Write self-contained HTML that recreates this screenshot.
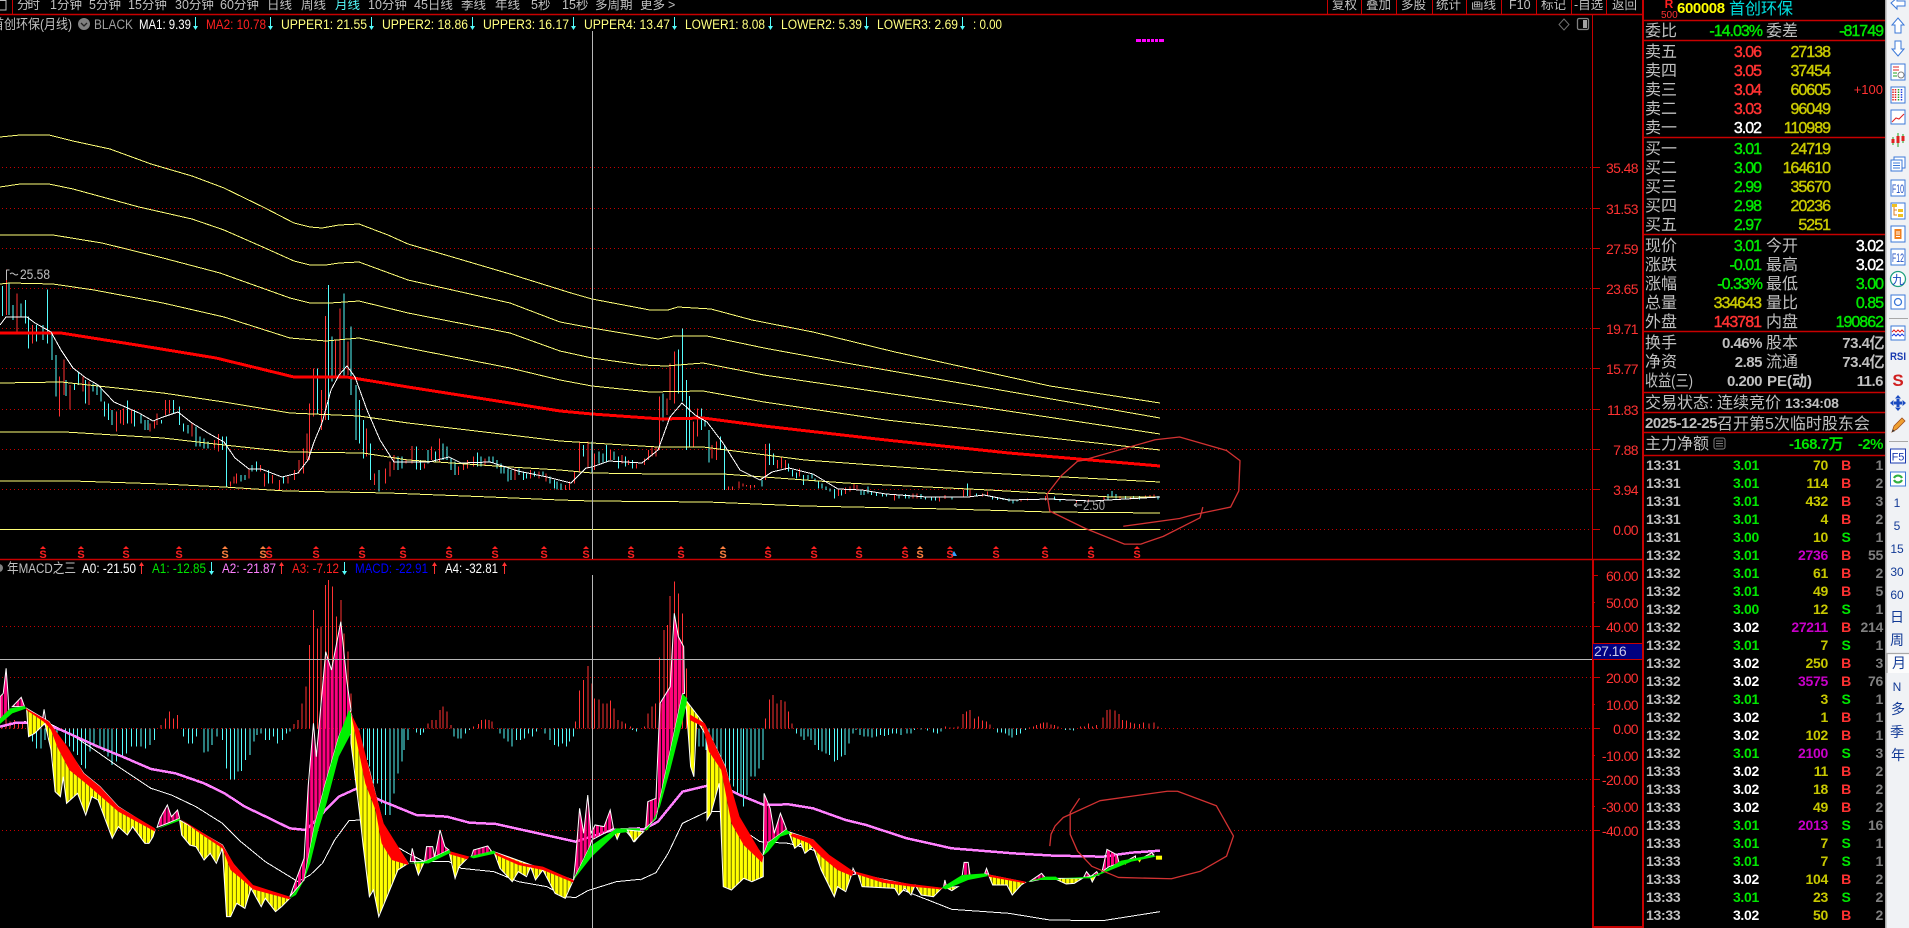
<!DOCTYPE html>
<html><head><meta charset="utf-8"><title>首创环保</title>
<style>
html,body{margin:0;padding:0;background:#000;width:1909px;height:928px;overflow:hidden}
svg{position:absolute;left:0;top:0;display:block}
text{font-family:"Liberation Sans","WenQuanYi Zen Hei","Noto Sans CJK SC",sans-serif;white-space:pre}
.v{vector-effect:non-scaling-stroke}
.gr{stroke:#c80000;stroke-width:1;stroke-dasharray:1 3}
.b{fill:none;stroke:#ffff78;stroke-width:1;shape-rendering:crispEdges}
.cr{shape-rendering:crispEdges}
.tb{font-size:12.5px;fill:#c0c0c0}
.ax{font-size:14px;fill:#ff3232;text-anchor:end;letter-spacing:-.6px}
.lg{font-size:13.5px}
.l{font-size:16px;fill:#c0c0c0}
.n{font-size:16px;font-weight:normal;text-anchor:end;letter-spacing:-1px;stroke-width:.45px}
.t{font-size:14px;font-weight:bold;letter-spacing:-.3px}
.u{font-size:15px;font-weight:bold;letter-spacing:-.5px}
.e{text-anchor:end}
.g{fill:#00e600}.w{fill:#fff}.y{fill:#c8c800}.m{fill:#c800c8}.r{fill:#ff3232}.s{fill:#c0c0c0}.d{fill:#808080}
.n .g{stroke:#00e600}.n .w{stroke:#fff}.n .y{stroke:#c8c800}.n .r{stroke:#ff3232}
.sm{font-size:11px;font-weight:bold;text-anchor:middle;fill:#ff2020}
.sb{font-size:14px;fill:#123a96;text-anchor:middle}
.bx{fill:#fff;stroke:#3b78d8;stroke-width:1}
</style></head><body>
<svg width="1909" height="928" viewBox="0 0 1909 928" xmlns="http://www.w3.org/2000/svg">
<defs>
<pattern id="st" patternUnits="userSpaceOnUse" width="10" height="10"><rect width="10" height="10" fill="#000"/><rect width="8.6" height="10" fill="#ffff00"/></pattern>
<pattern id="pk" patternUnits="userSpaceOnUse" width="10" height="10"><rect width="7.5" height="10" fill="#ff0080"/></pattern>
</defs>
<rect width="1909" height="928" fill="#000"/>

<!-- grid upper -->
<g class="gr"><path class="gr" d="M2 167.5H1592M2 208.5H1592M2 248.5H1592M2 288.5H1592M2 328.5H1592M2 368.5H1592M2 409.5H1592M2 449.5H1592M2 489.5H1592M1160 529.5H1592"/>
<path class="gr" d="M2 626.5H1592M2 677.5H1592M1 728.5H1592M2 779.5H1592M2 830.5H1592"/></g>

<!-- upper candles part 1 -->
<g transform="translate(0,260) scale(.40816,.33333)" fill="none" shape-rendering="crispEdges">
<path class="v" stroke="#54fcfc" d="M6 78V168M22 70V165M32 135V180M52 130V170M62 120V190M70 170V265M90 195V245M105 195V240M116 88V250M127 215V300M137 285V410M162 360V408M182 370V390M192 335V375M210 360V430M228 370V395M238 375V405M248 385V425M256 425V470M266 430V480M275 450V495M312 422V490M330 450V500M345 465V490M355 480V510M362 480V510M396 480V490M425 420V460M440 440V495M450 490V515M460 495V520M480 500V560M490 530V560M500 535V565M510 545V565M545 530V570M555 530V680M590 645V665M600 645V660M618 615V635M628 605V635M658 630V670M695 650V670M778 325V460M805 75V480M813 230V365M843 100V350M860 200V405M872 375V540M881 420V550M890 480V595M908 550V660M928 630V695M975 590V630M985 590V625M1020 560V628M1030 600V630M1048 570V610M1067 575V605M1085 550V600M1095 560V600M1105 595V630M1115 605V645M1170 578V620M1178 590V620M1198 590V605M1208 590V610M1218 600V625M1228 610V640M1235 620V640M1245 625V665M1252 630V660M1272 625V645M1282 635V660M1290 640V655M1310 635V650M1330 635V650M1348 650V670M1358 660V685M1365 665V688M1375 670V690M1430 555V590M1450 545V640M1467 575V610M1477 580V610M1486 555V605M1504 575V600M1515 590V625M1533 590V620M1550 600V625"/>
<path class="v" stroke="#ff3232" d="M16 28V165M42 100V215M80 195V250M146 350V470M157 298V405M172 375V448M203 350V395M218 365V435M285 455V515M295 450V490M303 445V495M322 450V490M368 490V515M378 480V505M385 460V495M405 420V465M415 420V460M470 490V530M525 540V565M535 522V575M565 665V680M573 650V670M580 640V670M610 625V655M638 615V635M648 640V680M668 645V670M685 660V690M705 650V670M722 630V660M733 600V640M743 565V640M752 520V600M758 430V600M768 325V470M788 390V510M797 168V480M822 240V350M833 145V350M852 245V345M898 505V590M918 640V675M945 625V670M955 605V650M965 585V630M995 600V610M1010 558V610M1040 610V625M1057 560V600M1077 535V605M1123 620V645M1135 610V630M1145 600V625M1160 590V620M1188 595V615M1262 625V660M1300 630V655M1320 635V655M1338 640V665M1385 675V690M1395 665V690M1408 635V670M1420 548V635M1440 545V625M1457 580V630M1496 570V600M1524 585V610M1540 600V615M1560 610V625"/>
</g>
<!-- upper candles part 2 -->
<g transform="translate(560,290) scale(.40816,.33333)" fill="none" shape-rendering="crispEdges">
<path class="v" stroke="#54fcfc" d="M252 310V395M290 178V310M300 115V335M310 270V480M317 318V470M347 355V420M355 390V410M365 420V518M393 440V480M403 465V600M495 570V590M513 460V525M523 490V525M560 520V545M570 540V560M580 548V565M597 555V585M607 555V570M617 550V565M625 565V575M633 575V595M642 580V595M652 590V600M662 595V605M672 597V625M690 600V617M737 600V615M745 600V615M755 590V610M763 605V615M775 608V618M790 610V620M800 610V620M830 615V625M847 612V625M855 615V625M885 612V627M895 620V628M910 622V632M920 622V632M960 622V628M998 580V618M1020 610V620M1060 618V628M1072 622V630M1085 624V630M1100 625V635M1110 628V640M1120 628V635M1212 620V630M1225 628V635M1342 612V628M1352 603V622M1362 612V625M1385 618V625M1405 618V625M1420 618V628M1465 618V628"/>
<path class="v" stroke="#ff3232" d="M207 505V525M217 480V510M225 470V500M235 470V500M244 320V480M262 325V375M270 220V330M280 185V340M327 395V470M337 355V440M373 465V505M383 455V510M413 590V600M423 590V600M438 575V595M448 580V590M457 585V590M467 585V595M477 585V592M503 462V570M533 510V535M543 500V535M552 510V540M587 535V560M682 595V618M700 592V612M710 590V605M720 582V600M728 585V600M820 612V632M865 610V625M875 610V625M930 622V635M943 615V627M988 600V622M1005 600V622M1035 610V620M1047 605V618M1130 628V635M1145 625V632M1190 618V632M1265 630V638M1295 628V636M1333 618V630M1372 618V628M1398 620V628M1435 616V624M1445 615V624M1455 613V623"/>
</g>

<!-- bands -->
<polyline class="b" points="0,137 20,135 49,135 73,141 110,149 151,164 192,176 224,188 265,208 294,223 310,227 322,228 339,225 359,224 388,235 408,244 449,256 510,274 571,293 592,299 650,310 668,310 678,307 711,309 752,320 813,332 895,352 968,368 1050,386 1160,403"/>
<polyline class="b" points="0,187 20,184 49,184 73,189 139,207 192,219 224,230 265,248 294,261 310,265 326,265 339,263 359,262 408,280 510,303 560,322 592,328 658,339 674,336 707,336 764,348 846,363 1160,418"/>
<polyline class="b" points="0,235 53,235 102,243 163,258 220,273 290,298 310,303 330,303 359,301 408,313 510,333 560,351 592,358 642,365 666,366 703,363 764,375 886,393 968,405 1160,434"/>
<polyline class="b" points="0,284 10,283 53,284 94,290 163,303 224,317 290,338 326,341 359,338 408,348 510,368 560,380 592,386 650,392 703,391 764,402 886,420 1160,450"/>
<polyline class="b" points="0,383 61,382 163,393 224,402 290,413 359,416 408,423 510,435 560,441 592,443 658,447 703,447 805,460 968,472 1160,482"/>
<polyline class="b" points="0,432 65,432 163,438 224,445 290,452 363,453 408,460 510,467 560,470 592,473 658,474 723,474 846,483 989,490 1111,497 1160,497"/>
<polyline class="b" points="0,481 73,481 163,484 224,487 286,491 388,493 490,497 560,500 592,501 707,502 805,506 948,509 1050,512 1160,513"/>
<path class="b" d="M0 529.5H1160"/>
<polyline class="cr" fill="none" stroke="#ff0000" stroke-width="3" points="0,333 61,333 143,346 216,358 294,377 347,377 408,387 510,403 560,411 592,414 662,419 703,418 764,426 886,440 1009,453 1160,466"/>
<polyline class="cr" fill="none" stroke="#fff" stroke-width="1" points="0,325 6,317 27,317 35,323 51,332 61,350 73,368 86,378 98,385 114,402 139,413 153,421 163,417 178,412 192,423 208,433 224,442 235,458 249,469 261,469 282,477 298,473 308,460 314,442 322,423 331,390 339,375 347,366 355,377 367,410 380,440 394,462 429,462 449,457 461,463 490,462 518,471 547,477 571,483 586,468 592,467 609,461 642,463 658,450 670,417 682,403 695,415 707,422 723,443 740,470 760,480 772,472 789,468 813,474 838,489 862,490 886,494 927,497 968,497 984,495 1009,500 1050,499 1091,501 1160,497"/>

<!-- top bar -->
<g class="tb">
<text x="17" y="9" textLength="23">分时</text><text x="50" y="9">1分钟</text><text x="89" y="9">5分钟</text><text x="128" y="9">15分钟</text><text x="175" y="9">30分钟</text><text x="220" y="9">60分钟</text><text x="267" y="9">日线</text><text x="301" y="9">周线</text><text x="335" y="9" style="fill:#54fcfc">月线</text><text x="368" y="9">10分钟</text><text x="414" y="9">45日线</text><text x="461" y="9">季线</text><text x="495" y="9">年线</text><text x="531" y="9">5秒</text><text x="562" y="9">15秒</text><text x="595" y="9">多周期</text><text x="640" y="9">更多</text><text x="668" y="9">&gt;</text>
<text x="1332" y="9">复权</text><text x="1366" y="9">叠加</text><text x="1401" y="9">多股</text><text x="1436" y="9">统计</text><text x="1471" y="9">画线</text><text x="1509" y="9">F10</text><text x="1541" y="9">标记</text><text x="1574" y="9">-自选</text><text x="1612" y="9">返回</text>
</g>
<path d="M0 .5H6V10H0" fill="none" stroke="#c0c0c0"/>
<path stroke="#c80000" fill="none" d="M12.5 0V14M1327.5 0V14M1361.5 0V14M1396.5 0V14M1432.5 0V14M1466.5 0V14M1501.5 0V14M1536.5 0V14M1571.5 0V14M1606.5 0V14"/>
<path stroke="#c80000" stroke-width="1.5" d="M0 14.5H1643"/>

<!-- upper legend -->
<g class="lg">
<text x="-8" y="29" fill="#c0c0c0" textLength="80" lengthAdjust="spacingAndGlyphs">首创环保(月线)</text>
<circle cx="84" cy="24" r="6" fill="#808080"/><path d="M81 23l3 3 3-3" fill="none" stroke="#222" stroke-width="1.3"/>
<text x="94" y="29" fill="#a0a0a0" textLength="39" lengthAdjust="spacingAndGlyphs">BLACK</text>
<text x="139" y="29" fill="#fff" textLength="52" lengthAdjust="spacingAndGlyphs">MA1: 9.39</text>
<text x="206" y="29" fill="#ff2020" textLength="60" lengthAdjust="spacingAndGlyphs">MA2: 10.78</text>
<g fill="#ffff80">
<text x="281" y="29" textLength="86" lengthAdjust="spacingAndGlyphs">UPPER1: 21.55</text>
<text x="382" y="29" textLength="86" lengthAdjust="spacingAndGlyphs">UPPER2: 18.86</text>
<text x="483" y="29" textLength="86" lengthAdjust="spacingAndGlyphs">UPPER3: 16.17</text>
<text x="584" y="29" textLength="86" lengthAdjust="spacingAndGlyphs">UPPER4: 13.47</text>
<text x="685" y="29" textLength="80" lengthAdjust="spacingAndGlyphs">LOWER1: 8.08</text>
<text x="781" y="29" textLength="81" lengthAdjust="spacingAndGlyphs">LOWER2: 5.39</text>
<text x="877" y="29" textLength="81" lengthAdjust="spacingAndGlyphs">LOWER3: 2.69</text>
<text x="973" y="29" textLength="29" lengthAdjust="spacingAndGlyphs">: 0.00</text>
</g></g>
<g stroke="#54fcfc" fill="#54fcfc"><path d="M195.5 17V26M270.5 17V26M371.5 17V26M472.5 17V26M573.5 17V26M674.5 17V26M770.5 17V26M866.5 17V26M962.5 17V26"/><path stroke="none" d="M193 26h5l-2.5 4zM268 26h5l-2.5 4zM369 26h5l-2.5 4zM470 26h5l-2.5 4zM571 26h5l-2.5 4zM672 26h5l-2.5 4zM768 26h5l-2.5 4zM864 26h5l-2.5 4zM960 26h5l-2.5 4z"/></g>

<path d="M1136 40.5H1165" stroke="#ff00ff" stroke-width="3" stroke-dasharray="5 1 4 1 3 1 3 1 3 1 5"/>
<path d="M1564 19l5 5.500-5 5.500-5-5.500z" fill="none" stroke="#707070"/>
<rect x="1577.500" y="18.500" width="11" height="11" rx="1.500" fill="none" stroke="#808080" stroke-width="1.300"/><rect x="1583" y="20" width="4" height="8" fill="#a0a0a0"/>

<text x="20" y="279" font-size="13.5" fill="#c0c0c0" textLength="30" lengthAdjust="spacingAndGlyphs">25.58</text>
<path d="M6.500 270V280M6.500 270h3M10 274q2-2 4 0t4 0" fill="none" stroke="#c0c0c0"/>
<path d="M1074 505h8M1074 505l3-2M1074 505l3 2" stroke="#c0c0c0" fill="none"/><text x="1083" y="510" font-size="13.500" fill="#a8a8a8" textLength="22" lengthAdjust="spacingAndGlyphs">2.50</text>

<!-- S markers -->
<g>
<path fill="#ff2020" d="M43 546l3 3h-6zM81 546l3 3h-6zM126 546l3 3h-6zM179 546l3 3h-6zM269 546l3 3h-6zM316 546l3 3h-6zM362 546l3 3h-6zM403 546l3 3h-6zM449 546l3 3h-6zM495 546l3 3h-6zM544 546l3 3h-6zM586 546l3 3h-6zM631 546l3 3h-6zM681 546l3 3h-6zM768 546l3 3h-6zM814 546l3 3h-6zM859 546l3 3h-6zM905 546l3 3h-6zM950 546l3 3h-6zM996 546l3 3h-6zM1045 546l3 3h-6zM1091 546l3 3h-6zM1137 546l3 3h-6z"/>
<path fill="#ff8040" d="M225 546l3 3h-6zM263 546l3 3h-6zM723 546l3 3h-6zM920 546l3 3h-6z"/>
<path fill="#30a0ff" d="M954 551l3 5h-6z"/>
<g class="sm"><text x="43" y="558">S</text><text x="81" y="558">S</text><text x="126" y="558">S</text><text x="179" y="558">S</text><text x="269" y="558">S</text><text x="316" y="558">S</text><text x="362" y="558">S</text><text x="403" y="558">S</text><text x="449" y="558">S</text><text x="495" y="558">S</text><text x="544" y="558">S</text><text x="586" y="558">S</text><text x="631" y="558">S</text><text x="681" y="558">S</text><text x="768" y="558">S</text><text x="814" y="558">S</text><text x="859" y="558">S</text><text x="905" y="558">S</text><text x="950" y="558">S</text><text x="996" y="558">S</text><text x="1045" y="558">S</text><text x="1091" y="558">S</text><text x="1137" y="558">S</text>
<g style="fill:#ff8040"><text x="225" y="558" style="fill:#ff8040">S</text><text x="263" y="558" style="fill:#ff8040">S</text><text x="723" y="558" style="fill:#ff8040">S</text><text x="920" y="558" style="fill:#ff8040">S</text></g></g>
</g>

<!-- divider -->
<path d="M0 559.500H1643" stroke="#c80000" stroke-width="1.500"/>

<!-- lower legend -->
<g class="lg">
<circle cx="-1" cy="568" r="4" fill="#808080"/>
<text x="7" y="573" fill="#c0c0c0" textLength="69" lengthAdjust="spacingAndGlyphs">年MACD之三</text>
<text x="82" y="573" fill="#fff" textLength="54" lengthAdjust="spacingAndGlyphs">A0: -21.50</text>
<text x="152" y="573" fill="#00e600" textLength="54" lengthAdjust="spacingAndGlyphs">A1: -12.85</text>
<text x="222" y="573" fill="#ff80ff" textLength="54" lengthAdjust="spacingAndGlyphs">A2: -21.87</text>
<text x="292" y="573" fill="#ff2020" textLength="47" lengthAdjust="spacingAndGlyphs">A3: -7.12</text>
<text x="355" y="573" fill="#0000ff" textLength="73" lengthAdjust="spacingAndGlyphs">MACD: -22.91</text>
<text x="445" y="573" fill="#fff" textLength="53" lengthAdjust="spacingAndGlyphs">A4: -32.81</text>
</g>
<path stroke="#ff3232" d="M141.500 565V574M281.500 565V574M434.500 565V574M504.500 565V574"/><path fill="#ff3232" d="M139 566h5l-2.500-4zM279 566h5l-2.500-4zM432 566h5l-2.500-4zM502 566h5l-2.500-4z"/>
<path stroke="#54fcfc" d="M211.500 562V571M344.500 562V571"/><path fill="#54fcfc" d="M209 571h5l-2.500 4zM342 571h5l-2.500 4z"/>

<!-- MACD left part -->
<g transform="translate(0,570) scale(.40816,.33333)">
<g fill="none" shape-rendering="crispEdges">
<path class="v" stroke="#ff3232" d="M5 475V465M15 475V440M25 475V455M35 475V450M45 475V455M55 475V455M395 475V465M405 475V445M415 475V425M425 475V445M435 475V435M720 475V462M730 475V450M740 475V400M750 475V350M758 475V225M768 475V120M778 475V175M787 475V170M797 475V45M805 475V30M815 475V50M825 475V140M835 475V90M843 475V190M852 475V245M860 475V370M1048 475V460M1058 475V450M1068 475V450M1078 475V420M1085 475V410M1095 475V425M1105 475V465M1160 475V470M1172 475V462M1180 475V450M1190 475V448M1198 475V450M1206 475V455M1410 475V455M1420 475V362M1430 475V330M1440 475V288M1450 475V340M1457 475V385M1467 475V388M1477 475V400M1487 475V400M1496 475V392M1504 475V415M1514 475V450M1524 475V455M1533 475V460M1545 475V470"/>
<path class="v" stroke="#54fcfc" d="M80 475V515M90 475V535M100 475V535M110 475V510M140 475V510M160 475V520M170 475V530M180 475V545M190 475V555M200 475V585M210 475V595M220 475V545M230 475V530M245 475V535M255 475V545M265 475V560M275 475V585M285 475V575M300 475V560M310 475V550M322 475V530M335 475V530M345 475V530M357 475V535M367 475V525M378 475V510M450 475V500M462 475V520M472 475V520M482 475V500M500 475V548M510 475V545M520 475V525M532 475V500M545 475V510M555 475V595M565 475V628M575 475V628M583 475V605M592 475V603M602 475V570M612 475V555M622 475V515M630 475V495M640 475V490M650 475V510M660 475V510M670 475V500M680 475V520M692 475V510M702 475V490M710 475V485M880 475V540M890 475V570M900 475V570M905 475V590M915 475V640M925 475V640M935 475V700M945 475V735M955 475V735M965 475V670M975 475V610M985 475V575M990 475V540M1000 475V510M1020 475V488M1030 475V495M1038 475V488M1112 475V500M1122 475V505M1130 475V505M1140 475V490M1150 475V480M1225 475V490M1235 475V505M1245 475V515M1255 475V530M1265 475V510M1275 475V510M1285 475V505M1295 475V490M1305 475V500M1315 475V485M1335 475V490M1347 475V510M1358 475V525M1368 475V530M1378 475V520M1388 475V530M1395 475V515M1405 475V500M1550 475V480M1560 475V485"/>
</g>
<polyline class="v cr" fill="none" stroke="#fff" stroke-width="1" points="0,470 60,455 120,460 170,490 220,530 290,590 345,635 370,655 420,675 480,710 545,760 590,815 650,875 730,935 760,915 790,880 820,810 855,752 882,750 930,800 1000,850 1040,875 1100,875 1130,895 1210,905 1270,935 1340,950 1385,980 1410,983 1440,962 1510,935 1568,928"/>
<polyline class="v cr" fill="none" stroke="#ff80ff" stroke-width="2.5" points="0,470 40,458 100,458 150,480 240,530 300,560 370,597 430,610 500,640 550,670 600,710 660,745 710,775 750,780 790,730 830,680 875,655 930,690 1020,735 1095,740 1150,758 1215,762 1300,785 1410,815 1500,780 1568,775"/>
<g fill="url(#st)" stroke="#fff" stroke-width="1">
<polygon class="v" points="65,415 120,455 150,510 205,610 245,650 290,710 380,780 375,800 365,820 355,820 325,770 312,795 290,770 275,805 240,690 225,680 210,735 190,670 163,700 155,620 148,680 135,665 125,540 110,460 85,490 70,500"/>
<polygon class="v" points="440,750 545,825 570,880 620,950 710,985 690,1010 675,1025 650,985 640,1010 615,955 600,1015 580,1000 565,1040 555,1040 545,835 530,880 515,850 500,870 480,830 465,825 445,795"/>
<polygon class="v" points="860,430 905,600 940,770 1000,880 975,900 955,960 928,1040 915,960 905,980 890,830 880,720 860,520"/>
<polygon class="v" points="1015,875 1040,875 1025,915"/>
<polygon class="v" points="1100,845 1145,865 1125,890 1115,925"/>
<polygon class="v" points="1210,845 1405,930 1385,985 1360,970 1330,900 1312,930 1300,890 1290,920 1270,905 1255,935 1225,895"/>
<polygon class="v" points="1505,785 1520,785 1512,808"/>
<polygon class="v" points="1530,778 1568,780 1568,795 1555,815 1545,800"/>
</g>
<g fill="url(#pk)" stroke="#fff" stroke-width="1">
<polygon class="v" points="0,380 8,370 15,295 20,380 22,430 0,450"/>
<polygon class="v" points="30,410 52,382 60,410"/>
<polygon class="v" points="104,450 108,418 112,450"/>
<polygon class="v" points="385,772 392,745 410,705 420,740 435,720 440,745 400,765"/>
<polygon class="v" points="710,980 725,930 745,865 755,650 768,460 775,560 798,245 812,300 835,155 850,335 860,420 830,500 795,650 770,770 745,930"/>
<polygon class="v" points="1005,875 1010,835 1018,875"/>
<polygon class="v" points="1040,875 1045,830 1060,830 1065,860"/>
<polygon class="v" points="1065,860 1078,780 1090,830 1100,840"/>
<polygon class="v" points="1155,860 1160,840 1195,828 1205,845"/>
<polygon class="v" points="1405,930 1410,870 1420,715 1430,790 1440,675 1448,790 1458,765 1480,770 1495,720 1503,775 1450,810 1445,830"/>
</g>
<g fill="#ff0000">
<polygon points="60,412 120,455 165,530 205,610 245,650 290,710 380,775 380,785 290,725 215,645 170,600 140,530 125,480 110,458 65,420"/>
<polygon points="440,745 545,825 575,885 620,945 710,980 710,988 620,958 590,925 565,900 545,835 490,790"/>
<polygon points="860,430 880,480 905,600 940,760 1000,878 1000,885 960,870 935,820 920,720 895,640 875,520"/>
<polygon points="1100,843 1150,860 1145,868 1100,852"/>
<polygon points="1210,845 1280,880 1330,890 1405,930 1405,938 1330,900 1270,885 1215,855"/>
</g>
<g fill="#00f000">
<polygon points="0,445 25,415 60,408 65,415 30,430 0,462"/>
<polygon points="380,780 440,745 440,752 390,775"/>
<polygon points="710,985 745,930 770,770 795,650 830,500 855,420 860,430 860,490 830,560 800,700 780,780 760,880 745,930 725,975"/>
<polygon points="1000,880 1040,875 1100,840 1105,848 1050,880"/>
<polygon points="1150,860 1210,842 1215,850 1160,865"/>
<polygon points="1405,930 1445,830 1510,775 1568,775 1568,782 1510,790 1450,860"/>
</g>
</g>

<!-- MACD right part -->
<g transform="translate(560,570) scale(.40816,.33333)">
<g fill="none" shape-rendering="crispEdges">
<path class="v" stroke="#ff3232" d="M207 475V470M216 475V430M225 475V410M234 475V400M244 475V262M250 475V400M255 475V180M263 475V165M270 475V78M280 475V35M290 475V70M300 475V130M310 475V295M503 475V445M513 475V388M522 475V375M532 475V400M542 475V390M551 475V395M560 475V425M569 475V460M945 475V470M955 475V473M965 475V472M975 475V470M987 475V432M996 475V425M1005 475V420M1015 475V445M1025 475V440M1035 475V452M1045 475V455M1053 475V463M1150 475V472M1160 475V470M1168 475V465M1177 475V460M1185 475V457M1193 475V458M1203 475V463M1212 475V465M1220 475V470M1275 475V470M1285 475V470M1295 475V460M1305 475V470M1315 475V465M1330 475V442M1340 475V420M1348 475V418M1360 475V422M1370 475V432M1378 475V450M1388 475V452M1398 475V457M1408 475V460M1420 475V462M1430 475V458M1443 475V460M1455 475V457M1465 475V470"/>
<path class="v" stroke="#54fcfc" d="M340 475V530M350 475V530M358 475V540M365 475V580M375 475V590M385 475V600M395 475V640M405 475V650M415 475V680M425 475V650M435 475V670M443 475V675M450 475V710M458 475V675M468 475V620M478 475V620M487 475V595M497 475V570M580 475V490M590 475V500M598 475V510M607 475V500M615 475V510M625 475V525M633 475V540M642 475V545M652 475V550M660 475V555M672 475V575M680 475V570M690 475V560M698 475V555M708 475V520M718 475V490M725 475V480M735 475V495M745 475V500M755 475V500M765 475V503M775 475V500M785 475V495M795 475V498M805 475V495M815 475V490M825 475V490M835 475V495M850 475V490M860 475V490M868 475V480M885 475V478M900 475V482M915 475V488M925 475V490M933 475V485M1072 475V487M1082 475V488M1092 475V490M1100 475V497M1108 475V503M1118 475V495M1128 475V490M1140 475V480M1238 475V480M1250 475V480M1258 475V482"/>
</g>
<polyline class="v cr" fill="none" stroke="#fff" stroke-width="1" points="196,930 235,908 265,850 300,760 360,725 395,725 430,765 490,815 560,820 620,840 680,885 720,905 790,935 860,970 960,1018 1100,1030 1200,1050 1330,1052 1470,1025"/>
<polyline class="v cr" fill="none" stroke="#ff80ff" stroke-width="2.5" points="196,778 205,778 240,755 300,665 385,640 440,675 500,705 560,703 620,715 700,750 750,765 850,805 960,835 1110,850 1210,857 1330,860 1400,848 1470,842"/>
<g fill="url(#st)" stroke="#fff" stroke-width="1">
<polygon class="v" points="165,780 205,785 180,815"/>
<polygon class="v" points="305,385 355,465 405,590 440,760 498,860 498,920 470,935 450,925 420,960 400,950 390,640 370,730 360,750 360,500 335,450 328,620 320,590 310,420"/>
<polygon class="v" points="560,785 620,810 660,860 715,912 700,965 680,950 672,980 640,900 620,830 600,850 590,820 575,835"/>
<polygon class="v" points="730,912 860,945 935,955 915,980 885,975 870,945 860,975 845,955 830,975 820,955 740,950"/>
<polygon class="v" points="945,952 975,950 960,962"/>
<polygon class="v" points="1050,915 1140,937 1130,945 1108,975 1095,945 1060,945"/>
<polygon class="v" points="1210,925 1280,925 1260,940 1240,942"/>
<polygon class="v" points="1298,918 1312,918 1304,936"/>
</g>
<g fill="#ffff00"><polygon points="1378,872 1390,872 1385,885"/><polygon points="1415,868 1425,866 1420,878"/><rect x="1460" y="857" width="15" height="12"/></g>
<g fill="url(#pk)" stroke="#fff" stroke-width="1">
<polygon class="v" points="210,775 215,695 235,685 245,400 270,350 280,130 290,200 303,230 305,370 300,372 260,600 235,745"/>
<polygon class="v" points="498,855 500,670 515,715 525,790 540,730 555,778 510,818"/>
<polygon class="v" points="715,915 718,895 725,912"/>
<polygon class="v" points="940,950 943,930 947,950"/>
<polygon class="v" points="985,920 990,877 1000,877 1005,920"/>
<polygon class="v" points="1040,912 1045,895 1050,912"/>
<polygon class="v" points="1150,935 1180,910 1190,925"/>
<polygon class="v" points="1283,922 1290,905 1300,920 1315,905 1320,915"/>
<polygon class="v" points="1328,905 1340,838 1365,855 1370,880 1345,890"/>
<polygon class="v" points="1385,875 1410,858 1410,868"/>
<polygon class="v" points="1430,862 1450,848 1455,855"/>
</g>
<g fill="#ff0000">
<polygon points="318,433 355,460 405,590 440,740 498,860 495,878 450,825 420,760 395,600 365,545 350,470 318,450"/>
<polygon points="570,790 620,808 660,855 720,905 715,918 680,900 640,860 610,820 565,798"/>
<polygon points="725,905 800,930 860,942 935,953 935,958 860,950 790,938 725,912"/>
<polygon points="1050,913 1140,935 1140,940 1050,920"/>
</g>
<g fill="#00f000">
<polygon points="205,782 235,745 260,600 300,372 312,385 305,430 270,600 245,710 215,780"/>
<polygon points="498,857 510,818 555,778 565,790 540,800 510,845"/>
<polygon points="935,953 985,915 1040,910 1050,918 1000,930 945,958"/>
<polygon points="1140,937 1190,920 1215,920 1225,930 1170,930"/>
<polygon points="1225,925 1300,920 1330,905 1375,872 1450,855 1460,860 1400,875 1340,905 1300,925"/>
</g>
</g>

<!-- crosshair -->
<path stroke="#b8b8b8" d="M592.500 31V559M592.500 575V928M0 659.500H1592" fill="none"/>

<!-- hand drawn circles -->
<g transform="translate(1000,400) scale(.40816,.3367)" fill="none" stroke="#d23232" stroke-width="1.300" stroke-linejoin="round">
<polyline class="v" points="302,375 440,352 470,342 565,318 585,270 588,180 555,150 440,110 380,118 200,180 190,182 150,225 115,280 122,330 210,382 305,428 345,428 400,405 490,350 497,318"/>
<polyline class="v" points="122,1325 125,1290 135,1265 155,1240 245,1190 410,1162 435,1162 530,1205 572,1295 555,1355 490,1400 420,1422 290,1418 225,1385 190,1340 172,1290 172,1225 195,1183"/>
</g>

<!-- axes -->
<path stroke="#c80000" d="M1592.500 14V559" fill="none"/>
<path stroke="#c80000" stroke-width="2" d="M1593 559V928M1643 0V928M1592 927H1643" fill="none"/>
<path stroke="#c80000" d="M1593 167.500h7M1593 208.500h7M1593 248.500h7M1593 288.500h7M1593 328.500h7M1593 368.500h7M1593 409.500h7M1593 449.500h7M1593 489.500h7M1593 529.500h7M1593 575.500h5M1593 602.500h2M1593 626.500h7M1593 677.500h7M1593 704.500h2M1593 728.500h7M1593 755.500h2M1593 779.500h7M1593 806.500h2M1593 830.500h7"/>
<g class="ax">
<text x="1638" y="173">35.48</text><text x="1638" y="214">31.53</text><text x="1638" y="254">27.59</text><text x="1638" y="294">23.65</text><text x="1638" y="334">19.71</text><text x="1638" y="374">15.77</text><text x="1638" y="415">11.83</text><text x="1638" y="455">7.88</text><text x="1638" y="495">3.94</text><text x="1638" y="535">0.00</text>
<text x="1638" y="581">60.00</text><text x="1638" y="608">50.00</text><text x="1638" y="632">40.00</text><text x="1638" y="683">20.00</text><text x="1638" y="710">10.00</text><text x="1638" y="734">0.00</text><text x="1638" y="761">-10.00</text><text x="1638" y="785">-20.00</text><text x="1638" y="812">-30.00</text><text x="1638" y="836">-40.00</text>
</g>
<rect x="1593" y="643" width="49" height="16" fill="#000080"/><path stroke="#c80000" d="M1593 643.500H1642M1593 659.500H1642"/>
<text x="1594" y="656" font-size="14" fill="#c8c8e8" letter-spacing="-.6">27.16</text>

<!-- right panel -->
<text x="1669" y="8" font-size="12" font-weight="bold" fill="#ff2020" text-anchor="middle">R</text>
<text x="1661" y="18" font-size="10" fill="#ff3232">500</text>
<text x="1677" y="13" font-size="15" font-weight="bold" fill="#ffff00" letter-spacing="-.4">600008</text>
<text x="1729" y="14" font-size="16" fill="#00e0e0">首创环保</text>
<path stroke="#c80000" stroke-width="1.500" fill="none" d="M1644 20.500H1885M1644 40.500H1885M1644 137.500H1885M1644 234.500H1885M1644 331.500H1885M1644 392.500H1885M1644 412.500H1885M1644 432.500H1885M1644 455.500H1885"/>

<g class="l">
<text x="1645" y="36">委比</text><text x="1766" y="36">委差</text>
<text x="1645" y="57">卖五</text><text x="1645" y="76">卖四</text><text x="1645" y="95">卖三</text><text x="1645" y="114">卖二</text><text x="1645" y="133">卖一</text>
<text x="1645" y="154">买一</text><text x="1645" y="173">买二</text><text x="1645" y="192">买三</text><text x="1645" y="211">买四</text><text x="1645" y="230">买五</text>
<text x="1645" y="251">现价</text><text x="1766" y="251">今开</text>
<text x="1645" y="270">涨跌</text><text x="1766" y="270">最高</text>
<text x="1645" y="289">涨幅</text><text x="1766" y="289">最低</text>
<text x="1645" y="308">总量</text><text x="1766" y="308">量比</text>
<text x="1645" y="327">外盘</text><text x="1766" y="327">内盘</text>
<text x="1645" y="348">换手</text><text x="1766" y="348">股本</text>
<text x="1645" y="367">净资</text><text x="1766" y="367">流通</text>
<text x="1645" y="386" textLength="48" lengthAdjust="spacingAndGlyphs">收益(三)</text><text x="1767" y="386" font-size="15" font-weight="bold">PE(动)</text>
<text x="1645" y="408">交易状态:</text><text x="1717" y="408">连续竞价</text>
<text x="1717" y="429">召开第5次临时股东会</text>
<text x="1645" y="449">主力净额</text>
</g>
<text x="1785" y="408" class="t s">13:34:08</text>
<text x="1645" y="428" class="u s" textLength="72">2025-12-25</text>
<rect x="1714" y="438" width="11" height="11" rx="2" fill="none" stroke="#808080"/><path d="M1716 441h7M1716 443.500h7M1716 446h7" stroke="#808080"/>

<g class="n">
<text x="1762" y="36" class="g">-14.03%</text><text x="1883" y="36" class="g">-81749</text>
<text x="1761" y="57" class="r">3.06</text><text x="1761" y="76" class="r">3.05</text><text x="1761" y="95" class="r">3.04</text><text x="1761" y="114" class="r">3.03</text><text x="1761" y="133" class="w">3.02</text>
<text x="1830" y="57" class="y">27138</text><text x="1830" y="76" class="y">37454</text><text x="1830" y="95" class="y">60605</text><text x="1830" y="114" class="y">96049</text><text x="1830" y="133" class="y">110989</text>
<text x="1761" y="154" class="g">3.01</text><text x="1761" y="173" class="g">3.00</text><text x="1761" y="192" class="g">2.99</text><text x="1761" y="211" class="g">2.98</text><text x="1761" y="230" class="g">2.97</text>
<text x="1830" y="154" class="y">24719</text><text x="1830" y="173" class="y">164610</text><text x="1830" y="192" class="y">35670</text><text x="1830" y="211" class="y">20236</text><text x="1830" y="230" class="y">5251</text>
<text x="1761" y="251" class="g">3.01</text><text x="1883" y="251" class="w">3.02</text>
<text x="1761" y="270" class="g">-0.01</text><text x="1883" y="270" class="w">3.02</text>
<text x="1762" y="289" class="g">-0.33%</text><text x="1883" y="289" class="g">3.00</text>
<text x="1761" y="308" class="y">334643</text><text x="1883" y="308" class="g">0.85</text>
<text x="1761" y="327" class="r">143781</text><text x="1883" y="327" class="g">190862</text>
</g>
<text x="1883" y="94" font-size="13" class="r e">+100</text>

<g>
<text x="1762" y="348" class="u s e">0.46%</text><text x="1762" y="367" class="u s e">2.85</text><text x="1762" y="386" class="u s e">0.200</text>
<text x="1884" y="348" class="u s e">73.4亿</text><text x="1884" y="367" class="u s e">73.4亿</text><text x="1883" y="386" class="u s e">11.6</text>
</g>
<text x="1843" y="449" class="u e g">-168.7万</text><text x="1883" y="449" class="u e g">-2%</text>

<!-- ticks: time -->
<g class="t s">
<text x="1646" y="470">13:31</text><text x="1646" y="488">13:31</text><text x="1646" y="506">13:31</text><text x="1646" y="524">13:31</text><text x="1646" y="542">13:31</text><text x="1646" y="560">13:32</text><text x="1646" y="578">13:32</text><text x="1646" y="596">13:32</text><text x="1646" y="614">13:32</text><text x="1646" y="632">13:32</text><text x="1646" y="650">13:32</text><text x="1646" y="668">13:32</text><text x="1646" y="686">13:32</text><text x="1646" y="704">13:32</text><text x="1646" y="722">13:32</text><text x="1646" y="740">13:32</text><text x="1646" y="758">13:32</text><text x="1646" y="776">13:33</text><text x="1646" y="794">13:33</text><text x="1646" y="812">13:33</text><text x="1646" y="830">13:33</text><text x="1646" y="848">13:33</text><text x="1646" y="866">13:33</text><text x="1646" y="884">13:33</text><text x="1646" y="902">13:33</text><text x="1646" y="920">13:33</text>
</g>
<!-- ticks: price -->
<g class="t e" transform="translate(1759 0)">
<text class="e g" y="470">3.01</text><text class="e g" y="488">3.01</text><text class="e g" y="506">3.01</text><text class="e g" y="524">3.01</text><text class="e g" y="542">3.00</text><text class="e g" y="560">3.01</text><text class="e g" y="578">3.01</text><text class="e g" y="596">3.01</text><text class="e g" y="614">3.00</text><text class="e w" y="632">3.02</text><text class="e g" y="650">3.01</text><text class="e w" y="668">3.02</text><text class="e w" y="686">3.02</text><text class="e g" y="704">3.01</text><text class="e w" y="722">3.02</text><text class="e w" y="740">3.02</text><text class="e g" y="758">3.01</text><text class="e w" y="776">3.02</text><text class="e w" y="794">3.02</text><text class="e w" y="812">3.02</text><text class="e g" y="830">3.01</text><text class="e g" y="848">3.01</text><text class="e g" y="866">3.01</text><text class="e w" y="884">3.02</text><text class="e g" y="902">3.01</text><text class="e w" y="920">3.02</text>
</g>
<!-- ticks: volume -->
<g class="t e" transform="translate(1828 0)">
<text class="e y" y="470">70</text><text class="e y" y="488">114</text><text class="e y" y="506">432</text><text class="e y" y="524">4</text><text class="e y" y="542">10</text><text class="e m" y="560">2736</text><text class="e y" y="578">61</text><text class="e y" y="596">49</text><text class="e y" y="614">12</text><text class="e m" y="632">27211</text><text class="e y" y="650">7</text><text class="e y" y="668">250</text><text class="e m" y="686">3575</text><text class="e y" y="704">3</text><text class="e y" y="722">1</text><text class="e y" y="740">102</text><text class="e m" y="758">2100</text><text class="e y" y="776">11</text><text class="e y" y="794">18</text><text class="e y" y="812">49</text><text class="e m" y="830">2013</text><text class="e y" y="848">7</text><text class="e y" y="866">7</text><text class="e y" y="884">104</text><text class="e y" y="902">23</text><text class="e y" y="920">50</text>
</g>
<!-- ticks: side -->
<g class="t" transform="translate(1846 0)" style="text-anchor:middle">
<text class="r" y="470">B</text><text class="r" y="488">B</text><text class="r" y="506">B</text><text class="r" y="524">B</text><text class="g" y="542">S</text><text class="r" y="560">B</text><text class="r" y="578">B</text><text class="r" y="596">B</text><text class="g" y="614">S</text><text class="r" y="632">B</text><text class="g" y="650">S</text><text class="r" y="668">B</text><text class="r" y="686">B</text><text class="g" y="704">S</text><text class="r" y="722">B</text><text class="r" y="740">B</text><text class="g" y="758">S</text><text class="r" y="776">B</text><text class="r" y="794">B</text><text class="r" y="812">B</text><text class="g" y="830">S</text><text class="g" y="848">S</text><text class="g" y="866">S</text><text class="r" y="884">B</text><text class="g" y="902">S</text><text class="r" y="920">B</text>
</g>
<!-- ticks: count -->
<g class="t e" transform="translate(1883 0)">
<text class="e d" y="470">1</text><text class="e d" y="488">2</text><text class="e d" y="506">3</text><text class="e d" y="524">2</text><text class="e d" y="542">1</text><text class="e d" y="560">55</text><text class="e d" y="578">2</text><text class="e d" y="596">5</text><text class="e d" y="614">1</text><text class="e d" y="632">214</text><text class="e d" y="650">1</text><text class="e d" y="668">3</text><text class="e d" y="686">76</text><text class="e d" y="704">1</text><text class="e d" y="722">1</text><text class="e d" y="740">1</text><text class="e d" y="758">3</text><text class="e d" y="776">2</text><text class="e d" y="794">2</text><text class="e d" y="812">2</text><text class="e d" y="830">16</text><text class="e d" y="848">1</text><text class="e d" y="866">1</text><text class="e d" y="884">2</text><text class="e d" y="902">2</text><text class="e d" y="920">2</text>
</g>

<!-- sidebar -->
<rect x="1885" y="0" width="24" height="928" fill="#f0f2f5"/>
<rect x="1885" y="0" width="1.500" height="928" fill="#a8a8a8"/>
<path d="M1889 318.500H1908M1889 441.500H1908" stroke="#a8a8a8"/>
<g fill="#fff" stroke="#3b78d8">
<path d="M1891 3l6-5v3h8v5h-8v3z"/>
<path d="M1898 18l6 7h-3v8h-6v-8h-3z"/>
<path d="M1898 56l6-7h-3v-8h-6v8h-3z"/>
</g>
<g transform="translate(1898,72)"><rect class="bx" x="-7" y="-8" width="14" height="16"/><path d="M-5-5h6M-5-2h6" stroke="#e02020"/><path d="M-5 1h4M-5 4h4" stroke="#20a020"/><circle cx="3" cy="3" r="3" fill="none" stroke="#808080"/></g>
<g transform="translate(1898,95)"><rect class="bx" x="-7" y="-8" width="14" height="16"/><path d="M-5-6V6M-2.500-6V6" stroke="#e02020" stroke-dasharray="1.500 1" stroke-width="1.500"/><path d="M.5-6V6" stroke="#20a020" stroke-dasharray="1.500 1" stroke-width="1.500"/><path d="M3.500-6V6" stroke="#2040e0" stroke-dasharray="1.500 1" stroke-width="1.500"/></g>
<g transform="translate(1898,117)"><rect class="bx" x="-7" y="-7" width="14" height="14"/><path d="M-6 5l4-4 3 1 5-5" stroke="#e02020" fill="none"/></g>
<g transform="translate(1898,140)"><path d="M-5-3V5M0-7V7M5-6V3" stroke="#20a020"/><rect x="-6.500" y="-1" width="3" height="4" fill="#e02020"/><rect x="-1.500" y="-4" width="3" height="7" fill="#e02020"/><rect x="3.500" y="-4" width="3" height="5" fill="#e02020"/></g>
<g transform="translate(1898,164)"><rect class="bx" x="-4" y="-7" width="11" height="11"/><rect class="bx" x="-7" y="-4" width="11" height="11"/><path d="M-5-1h7M-5 1.500h7M-5 4h7" stroke="#3b78d8"/></g>
<g transform="translate(1898,188)"><rect class="bx" x="-7" y="-8" width="14" height="16"/><text x="0" y="5" font-size="12" text-anchor="middle" fill="#1a4ac0" textLength="12" lengthAdjust="spacingAndGlyphs">F10</text></g>
<g transform="translate(1898,211)"><rect class="bx" x="-7" y="-8" width="14" height="16"/><path d="M-4-5V4h3M-4-1h3" stroke="#e08020" fill="none"/><rect x="-6" y="-7" width="5" height="3" fill="#f0c020"/><rect x="0" y="-2" width="5" height="3" fill="#f0c020"/><rect x="0" y="3" width="5" height="3" fill="#f0c020"/></g>
<g transform="translate(1898,234)"><rect class="bx" x="-7" y="-8" width="14" height="16"/><rect x="-3.500" y="-5" width="7" height="10" fill="#f08020"/><path d="M-2-2h4M-2 0h4M-2 2.500h4" stroke="#fff"/></g>
<g transform="translate(1898,257)"><rect class="bx" x="-7" y="-8" width="14" height="16"/><text x="0" y="5" font-size="12" text-anchor="middle" fill="#1a4ac0" textLength="12" lengthAdjust="spacingAndGlyphs">F12</text></g>
<g transform="translate(1898,279)"><circle r="7.500" fill="#fff" stroke="#20a080" stroke-width="1.300"/><text y="5" font-size="12" text-anchor="middle" fill="#1a4ac0">九</text></g>
<g transform="translate(1898,303)"><rect class="bx" x="-7" y="-8" width="14" height="14"/><circle cy="-1" r="3.500" fill="none" stroke="#3b78d8" stroke-width="1.300"/></g>
<g transform="translate(1898,333)"><rect class="bx" x="-7" y="-7" width="14" height="14"/><path d="M-6-1l2-2 2 2 2-2 2 2 2-2 2 2" fill="none" stroke="#e02020"/><path d="M-6 3l2-2 2 2 2-2 2 2 2-2 2 2" fill="none" stroke="#2040e0"/></g>
<text x="1898" y="360" font-size="11" font-weight="bold" fill="#1a3ab0" text-anchor="middle" textLength="16" lengthAdjust="spacingAndGlyphs">RSI</text>
<text x="1898" y="386" font-size="17" font-weight="bold" fill="#d02020" text-anchor="middle">S</text>
<g transform="translate(1898,403)" fill="#1a4ac0"><path d="M0-8l3 3.500h-6zM0 8l3-3.500h-6zM-8 0l3.500-3v6zM8 0l-3.500-3v6z"/><rect x="-4" y="-1.500" width="8" height="3"/><rect x="-1.500" y="-4" width="3" height="8"/></g>
<g transform="translate(1898,425)"><path d="M-6 7l2-6 8-8 3 3-8 8z" fill="#f0a030" stroke="#a05020" stroke-width=".8"/><path d="M-6 7l.8-2.800 2 2z" fill="#333"/></g>
<g transform="translate(1898,456)"><rect class="bx" x="-7.500" y="-7" width="15" height="14" style="stroke:#1a3ab0"/><text y="4.500" font-size="11" text-anchor="middle" fill="#1a3ab0">F5</text></g>
<g transform="translate(1898,479)"><rect class="bx" x="-7.500" y="-7" width="15" height="14"/><path d="M-4 -1a4.500 4.500 0 0 1 8 0M4 1a4.500 4.500 0 0 1-8 0" fill="none" stroke="#30b040" stroke-width="2.200"/></g>
<rect x="1887" y="653" width="22" height="20" fill="#fcfcfc"/><path d="M1887 673V653.500H1909" fill="none" stroke="#a8a8a8" stroke-width="1.300"/>
<g class="sb">
<text x="1897" y="507" font-size="12">1</text><text x="1897" y="530" font-size="12">5</text><text x="1897" y="553" font-size="12">15</text><text x="1897" y="576" font-size="12">30</text><text x="1897" y="599" font-size="12">60</text>
<text x="1897" y="622">日</text><text x="1897" y="645">周</text><text x="1899" y="668">月</text><text x="1897" y="691" font-size="12">N</text><text x="1898" y="714">多</text><text x="1897" y="737">季</text><text x="1898" y="760">年</text>
</g>
</svg>
</body></html>
